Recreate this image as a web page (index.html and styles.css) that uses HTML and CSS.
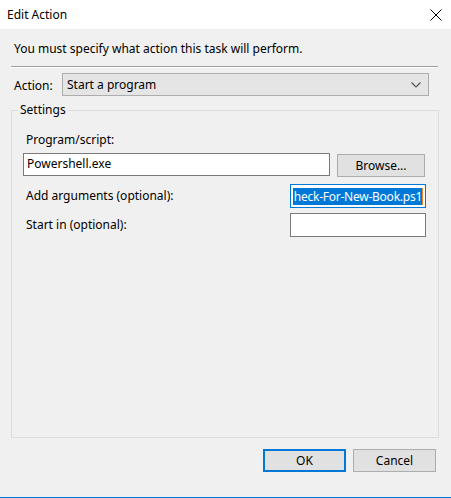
FILE: index.html
```html
<!DOCTYPE html>
<html lang="en">
<head>
<meta charset="utf-8">
<title>Edit Action</title>
<link rel="stylesheet" href="styles.css">
</head>
<body>
<div class="window">
  <div class="titlebar">
    <span class="title">Edit Action</span>
    <svg class="close" width="12" height="12" viewBox="0 0 12 12"><path d="M0.5 0.5 L11.5 11.5 M11.5 0.5 L0.5 11.5" stroke="#000" stroke-width="1" fill="none"/></svg>
  </div>
  <div class="body">
    <p class="message">You must specify what action this task will perform.</p>
    <div class="separator"></div>
    <div class="action-row">
      <span class="action-label">Action:</span>
      <div class="combo">
        <span>Start a program</span>
        <svg class="chevron" width="10" height="6" viewBox="0 0 10 6"><path d="M0.5 0.5 L5 5 L9.5 0.5" stroke="#555" stroke-width="1.2" fill="none"/></svg>
      </div>
    </div>
    <fieldset class="group">
      <legend>Settings</legend>
      <div class="label">Program/script:</div>
      <div class="program-row">
        <div class="field program">Powershell.exe</div>
        <div class="button browse">Browse...</div>
      </div>
      <div class="opt-row args-row">
        <span class="label">Add arguments (optional):</span>
        <div class="field small focused"><span class="sel">heck-For-New-Book.ps1</span><span class="caret"></span></div>
      </div>
      <div class="opt-row start-row">
        <span class="label">Start in (optional):</span>
        <div class="field small"></div>
      </div>
    </fieldset>
    <div class="buttons">
      <div class="button default">OK</div>
      <div class="button">Cancel</div>
    </div>
  </div>
  <div class="bottom-edge"></div>
</div>
</body>
</html>
```
FILE: styles.css
```css
html, body {
  margin: 0;
  padding: 0;
}
body {
  width: 451px;
  height: 498px;
  overflow: hidden;
  background: #f0f0f0;
  font-family: "Noto Sans", "Open Sans", sans-serif;
  font-size: 12px;
  color: #000;
}
.window {
  display: flex;
  flex-direction: column;
  height: 498px;
}
.titlebar {
  height: 29px;
  background: #fff;
  display: flex;
  align-items: center;
  justify-content: space-between;
  padding: 0 9px 0 7px;
  flex: none;
}
.title {
  line-height: 16px;
  margin-top: 1px;
}
.close {
  display: block;
  margin-top: 1px;
}
.body {
  flex: 1;
  display: flex;
  flex-direction: column;
}
.message {
  margin: 12px 0 0 14px;
  line-height: 16px;
}
.separator {
  margin: 9px 13px 0 11px;
  border-top: 1px solid #a0a0a0;
  border-bottom: 1px solid #fff;
}
.action-row {
  display: flex;
  align-items: center;
  margin: 5px 0 0 14px;
}
.action-label {
  width: 48px;
  line-height: 16px;
  padding-top: 2px;
}
.combo {
  width: 367px;
  height: 23px;
  box-sizing: border-box;
  border: 1px solid #adadad;
  background: #e5e5e5;
  display: flex;
  align-items: center;
  justify-content: space-between;
  padding: 0 7px 0 4px;
}
.chevron {
  display: block;
}
.group {
  margin: 6px 12px 0 11px;
  padding: 14px 12px 0 11px;
  border: 1px solid #dcdcdc;
  height: 336px;
  box-sizing: border-box;
  min-width: 0;
}
.group legend {
  padding: 0 2px;
  margin-left: -5px;
  line-height: 16px;
}
.label {
  line-height: 16px;
  padding-left: 3px;
}
.program-row {
  display: flex;
  align-items: flex-start;
  margin-top: 5px;
}
.field {
  background: #fff;
  border: 1px solid #7a7a7a;
  box-sizing: border-box;
  line-height: 16px;
}
.program {
  width: 307px;
  height: 23px;
  padding: 2px 3px;
}
.button {
  background: #e1e1e1;
  border: 1px solid #adadad;
  box-sizing: border-box;
  height: 23px;
  width: 83px;
  display: flex;
  align-items: center;
  justify-content: center;
}
.browse {
  width: 88px;
  margin-left: 7px;
  margin-top: 1px;
}
.opt-row {
  display: flex;
  align-items: center;
  justify-content: space-between;
}
.args-row {
  margin-top: 7px;
}
.start-row {
  margin-top: 5px;
}
.small {
  width: 136px;
  height: 24px;
}
.focused {
  border-color: #0078d7;
  display: flex;
  justify-content: flex-end;
  align-items: center;
  overflow: hidden;
  padding: 0 2px;
}
.sel {
  background: #0078d7;
  color: #fff;
  white-space: nowrap;
  line-height: 17px;
  letter-spacing: -0.25px;
  padding-left: 1px;
}
.caret {
  width: 1px;
  height: 17px;
  background: #f08020;
  flex: none;
}
.buttons {
  display: flex;
  justify-content: flex-end;
  gap: 7px;
  margin: 11px 15px 0 0;
}
.default {
  border: 2px solid #0078d7;
}
.bottom-edge {
  margin-top: auto;
  height: 1px;
  background: #0078d7;
  flex: none;
}
```
